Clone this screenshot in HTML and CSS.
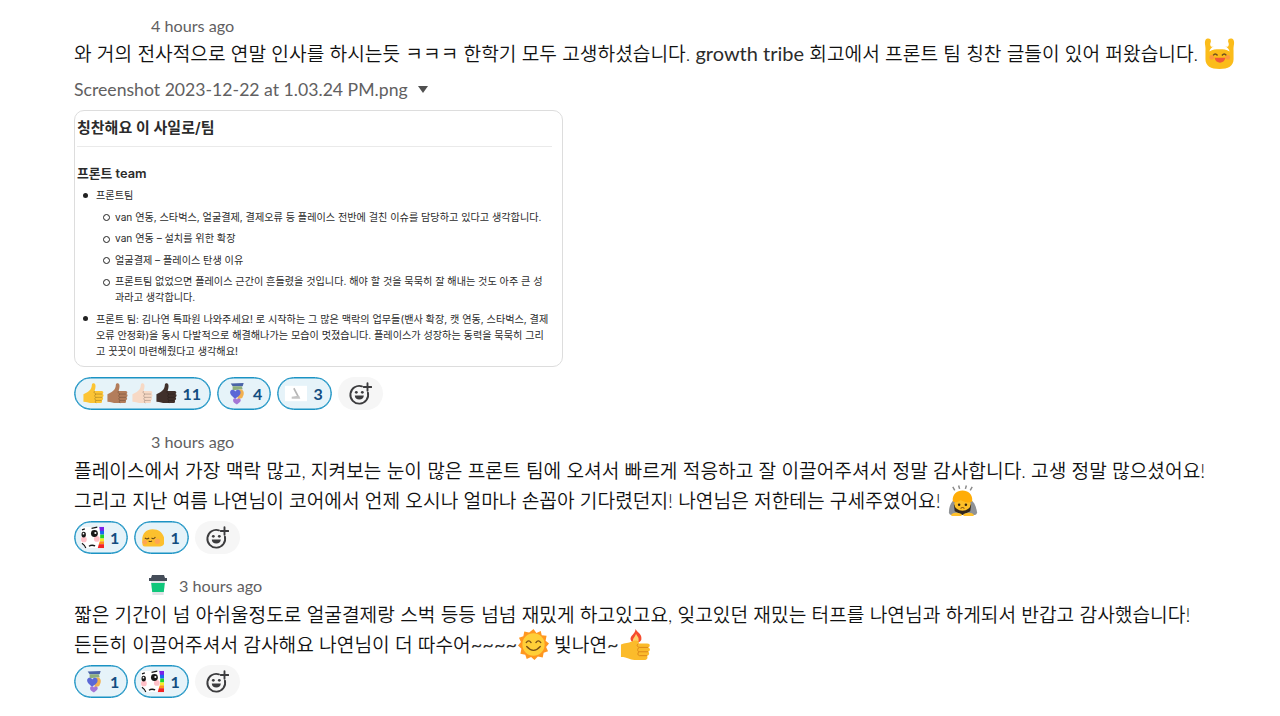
FILE: index.html
```
<!DOCTYPE html>
<html lang="ko">
<head>
    <meta charset="UTF-8">
    <meta name="viewport" content="width=device-width, initial-scale=1.0">
    <title>프론트 팀 칭찬</title>
    <link rel="stylesheet" href="styles.css">
</head>
<body>
    <!-- Shared icons -->
    <svg class="sprite" xmlns="http://www.w3.org/2000/svg">
        <symbol id="thumb" viewBox="0 0 24 24">
            <path d="M1.5 12.8C3.5 11.6 5.6 11.2 7.2 9.5C9.4 7.3 10.2 5.5 10.3 2.8C10.4.8 13.6.6 14 3.2C14.4 5.5 13.6 7.5 13.2 9.5H20.3C22.6 9.5 22.8 12 21.2 12.6C23.1 13 22.8 15.5 21.3 16C22.6 16.6 22.2 18.9 20.6 19.2C21.5 20.2 20.7 22 19.1 22H10.5C7.5 22 5.5 20.8 1.5 20.6Z" fill="currentColor"/>
            <path d="M14.5 12.6H21.2M14.3 16H21.3M14.5 19.2H20.6M13.2 9.5C11.8 10.5 13 12 14.5 12.6C13 13.3 13 15.3 14.3 16C13 16.7 13.2 18.6 14.5 19.2C13.5 20 13.8 21.5 15 22" fill="none" stroke="#000" stroke-opacity=".28" stroke-width=".8"/>
        </symbol>
        <symbol id="add-reaction" viewBox="0 0 24 24">
            <path d="M14 4.3A8.9 8.9 0 1 0 19.9 10.6" fill="none" stroke="#3c3c3e" stroke-width="1.9" stroke-linecap="round"/>
            <path d="M19.5 1.2V8.8M15.7 5H23.3" fill="none" stroke="#3c3c3e" stroke-width="1.9" stroke-linecap="round"/>
            <circle cx="8.3" cy="10.3" r="1.4" fill="#3c3c3e"/>
            <circle cx="14.3" cy="10.3" r="1.4" fill="#3c3c3e"/>
            <path d="M6.8 13.6H15.8C15.8 16 13.9 17.6 11.3 17.6S6.8 16 6.8 13.6Z" fill="#3c3c3e"/>
        </symbol>
        <symbol id="grape" viewBox="0 0 24 24">
            <path d="M7 1.500L20.500 1L19.500 4.500H9Z" fill="#4a63a8"/>
            <path d="M9 4.500H18.500L19.500 7.500L9 8.500Z" fill="#8fae7c"/>
            <path d="M17.500 7.500C22 8.500 21 14 18.500 17L14 18L15 9Z" fill="#f2b150"/>
            <path d="M11.800 17.500C9 15.500 5.700 13 6.500 10C7.500 7 11 8 11.800 9.800C13.500 7 17.500 8 17.300 11C17.300 14 14 15.500 11.800 17.500Z" fill="#5b68d6"/>
            <path d="M13.500 23.500C11 22 9 20.700 9.500 18.500C10.300 16.200 13 17 13.500 18.300C14.500 16.500 17.500 17 17.500 19C17.500 21 15 22 13.500 23.500Z" fill="#a477d6"/>
        </symbol>
        <symbol id="rainbow-face" viewBox="0 0 24 24">
            <path d="M18 1H24V6H18Z" fill="#7a22e8"/>
            <path d="M18 5H24V9H18Z" fill="#1667f0"/>
            <path d="M18 9H24V13H18Z" fill="#1fd42b"/>
            <path d="M18 13H24V16H18Z" fill="#f8ed24"/>
            <path d="M18 16H24V19H18Z" fill="#ff9418"/>
            <path d="M17 19H24V23H17Z" fill="#f22525"/>
            <path d="M0 1H19C20 5 20.500 12 19.500 16L17.500 23H6L0 17Z" fill="#fff"/>
            <circle cx="3" cy="14" r="3" fill="#ffc0c8"/>
            <circle cx="16.500" cy="13.500" r="3" fill="#ffc0c8"/>
            <ellipse cx="2.800" cy="9" rx="2.300" ry="2.900" fill="#181818"/>
            <ellipse cx="14" cy="7.800" rx="3.600" ry="3.600" fill="#181818"/>
            <circle cx="2.600" cy="8" r=".9" fill="#fff"/>
            <circle cx="15" cy="7.300" r="1.100" fill="#fff"/>
            <path d="M1 4L4 3M11 2.500L17 1.200M1 18Q4 20 5 23" fill="none" stroke="#181818" stroke-width="1.200"/>
            <path d="M8 20.500Q11 18.500 15 20L14.500 21.500Q11 20.300 8.500 21.700Z" fill="#181818"/>
        </symbol>
    </svg>

    <div class="thread">
        <div class="message">
            <div class="message-head">4 hours ago</div>
            <div class="message-text">
                <span class="line">와 거의 전사적으로 연말 인사를 하시는듯 ㅋㅋㅋ 한학기 모두 고생하셨습니다. <span class="latin">growth tribe</span> 회고에서 프론트 팀 칭찬 글들이 있어 퍼왔습니다.</span>
                <svg class="emoji" viewBox="0 0 32 32">
                    <path d="M1.500 2C3-.5 8 0 7 4C5.500 7 7 9.500 9 9H23C25 9.500 26.500 7 25 4C24 0 29-.5 30.500 2C32 6 30 8 30.500 13V22C30.500 29 25 32 16 32S1.500 29 1.500 22V13C2 8 0 6 1.500 2Z" fill="#fbbc1a"/>
                    <path d="M5.500 14C7 9.500 10 7.500 16 7.500S25 9.500 26.500 14C23 11.500 20 11.500 16 11.500S9 11.500 5.500 14Z" fill="#fff"/>
                    <circle cx="8" cy="20" r="2.500" fill="#ff993c"/>
                    <circle cx="24.500" cy="20" r="2.500" fill="#ff993c"/>
                    <path d="M9.500 18Q11.500 15 14 18M18.500 18Q21 15 23 18" fill="none" stroke="#71501e" stroke-width="1.500"/>
                    <path d="M11 20.500H22C21.500 24 19 25.500 16.500 25.500S11.500 24 11 20.500Z" fill="#f05838"/>
                </svg>
            </div>
            <div class="file-name">Screenshot 2023-12-22 at 1.03.24 PM.png <span class="caret"></span></div>
            <div class="attachment">
                <h1 class="doc-title">칭찬해요 이 사일로/팀</h1>
                <h2 class="doc-subtitle">프론트 team</h2>
                <ul class="doc-list">
                    <li>프론트팀
                        <ul class="doc-sublist">
                            <li>van 연동, 스타벅스, 얼굴결제, 결제오류 등 플레이스 전반에 걸친 이슈를 담당하고 있다고 생각합니다.</li>
                            <li>van 연동 – 설치를 위한 확장</li>
                            <li>얼굴결제 – 플레이스 탄생 이유</li>
                            <li>프론트팀 없었으면 플레이스 근간이 흔들렸을 것입니다. 해야 할 것을 묵묵히 잘 해내는 것도 아주 큰 성<br>과라고 생각합니다.</li>
                        </ul>
                    </li>
                    <li>프론트 팀: 김나연 특파원 나와주세요! 로 시작하는 그 많은 맥락의 업무들(밴사 확장, 캣 연동, 스타벅스, 결제<br>오류 안정화)을 동시 다발적으로 해결해나가는 모습이 멋졌습니다. 플레이스가 성장하는 동력을 묵묵히 그리<br>고 꿋꿋이 마련해줬다고 생각해요!</li>
                </ul>
            </div>
            <div class="reactions">
                <div class="reaction reaction-wide">
                    <svg class="icon skin-yellow"><use href="#thumb"/></svg>
                    <svg class="icon skin-medium"><use href="#thumb"/></svg>
                    <svg class="icon skin-light"><use href="#thumb"/></svg>
                    <svg class="icon skin-dark"><use href="#thumb"/></svg>
                    <span class="count">11</span>
                </div>
                <div class="reaction">
                    <svg class="icon"><use href="#grape"/></svg>
                    <span class="count">4</span>
                </div>
                <div class="reaction">
                    <svg class="icon" viewBox="0 0 24 24">
                        <path d="M1 4H24V20H1Z" fill="#fff"/>
                        <path d="M11 6L15.500 14.500L13.800 15L9.500 7Z" fill="#b5b5b5"/>
                        <path d="M8 15.500L13 14.500H16L17 17.500H8Z" fill="#c4c4c4"/>
                    </svg>
                    <span class="count">3</span>
                </div>
                <div class="add"><svg class="add-icon"><use href="#add-reaction"/></svg></div>
            </div>
        </div>

        <div class="message">
            <div class="message-head">3 hours ago</div>
            <div class="message-text">
                <span class="line">플레이스에서 가장 맥락 많고, 지켜보는 눈이 많은 프론트 팀에 오셔서 빠르게 적응하고 잘 이끌어주셔서 정말 감사합니다. 고생 정말 많으셨어요!</span><br>
                <span class="line">그리고 지난 여름 나연님이 코어에서 언제 오시나 얼마나 손꼽아 기다렸던지! 나연님은 저한테는 구세주였어요!</span>
                <svg class="emoji" viewBox="0 0 32 32">
                    <path d="M6 2L8 5.500M12 .5L13 4M20 .5L19 4M26 2L24 5.500" stroke="#888" stroke-width="1.500"/>
                    <path d="M8 15C4 17 2 23 2 28Q2 31 6 31H27Q31 31 31 28C30 22 28 17 24 15Z" fill="#8f9296"/>
                    <path d="M7 20H25L24 27L16 31L8 27Z" fill="#30271d"/>
                    <ellipse cx="16" cy="19.500" rx="8.500" ry="7" fill="#fcbf28"/>
                    <path d="M6 17C4 2 28 2 26 17C22 19 18 17.500 14 15.500C12 17.500 9 18.500 6 17Z" fill="#ffad08"/>
                    <circle cx="12.500" cy="20.500" r="1.300" fill="#352512"/>
                    <circle cx="19.500" cy="20.500" r="1.300" fill="#352512"/>
                    <path d="M14 24Q16 22.500 18 24" fill="none" stroke="#71400b"/>
                    <path d="M4 31Q7 27 15 30V32H5ZM28 31Q25 27 17 30V32H27Z" fill="#ffc12c"/>
                </svg>
            </div>
            <div class="reactions">
                <div class="reaction">
                    <svg class="icon"><use href="#rainbow-face"/></svg>
                    <span class="count">1</span>
                </div>
                <div class="reaction">
                    <svg class="icon" viewBox="0 0 24 24">
                        <path d="M1.500 19C0 8 5 3.500 12 3.500C20 3.500 24.500 9 24.500 16C24.500 20 22 21.500 18 21.500H6C3 21.500 1.700 21 1.500 19Z" fill="#fcc02e"/>
                        <circle cx="4" cy="17" r="2.300" fill="#ffa552"/>
                        <circle cx="17" cy="16" r="2.700" fill="#ffa552"/>
                        <path d="M4 12.500Q6 14.500 8.500 12.500M11 12.500Q13 14.500 15 11.500M8 15.500Q9.500 17 11.500 15.500" fill="none" stroke="#604219" stroke-width="1.100"/>
                    </svg>
                    <span class="count">1</span>
                </div>
                <div class="add"><svg class="add-icon"><use href="#add-reaction"/></svg></div>
            </div>
        </div>

        <div class="message">
            <div class="message-head has-status">
                <svg class="status" viewBox="0 0 18 20">
                    <path d="M3 0H15L16 3H18V6H0V3H2Z" fill="#454d59"/>
                    <path d="M2 6H16L14.500 20H3.500Z" fill="#dfe3e6"/>
                    <path d="M2.200 8H15.800L14.800 17H3.200Z" fill="#10c77b"/>
                </svg>
                3 hours ago
            </div>
            <div class="message-text">
                <span class="line">짧은 기간이 넘 아쉬울정도로 얼굴결제랑 스벅 등등 넘넘 재밌게 하고있고요, 잊고있던 재밌는 터프를 나연님과 하게되서 반갑고 감사했습니다!</span><br>
                <span class="line">든든히 이끌어주셔서 감사해요 나연님이 더 따수어<span class="latin">~~~~</span></span><svg class="emoji" viewBox="0 0 32 32">
                    <path d="M16 0L19 4L23.500 2L24.500 6.500L29.500 7L28.500 12L32 15L29 18.500L31 23L26.500 24.500L25.500 29.500L20.500 28.500L17 32L13.500 29L9 31L7.500 26.500L2.500 25.500L3.500 20.500L0 17L3 13.500L1 9L5.500 7.500L6.500 2.500L11.500 3.500Z" fill="#ff9720"/>
                    <circle cx="16" cy="16" r="11.500" fill="#ffcf38"/>
                    <path d="M8.500 14Q11 10.500 13.500 14M18.500 14Q21 10.500 23.500 14M9 18Q16 26 23 18" fill="none" stroke="#795016" stroke-width="1.400" stroke-linecap="round"/>
                </svg>
                <span class="line">빛나연<span class="latin">~</span></span><svg class="emoji" viewBox="0 0 32 32">
                    <path d="M16 0C18 4 23 5 22 11C21 15 12 15 11 11C10 7 16 5 16 0Z" fill="#f64c2f"/>
                    <path d="M16.500 5C18 8 20 9 19 13H13.500C12.500 10 16 8 16.500 5Z" fill="#ffd06b"/>
                    <path d="M1 16C5 14 9 15 12 13C14 11.500 19 11 19.500 13.500L19 15H28C32 15 31 19 29 19C32 20 31 23 29 23.500C31 24.500 30 27.500 28 27.500C29 30 28 32 25 32H15C10 32 8 29 1 29Z" fill="#fbbb2b"/>
                    <path d="M20 19H29M19.500 23.500H29M20 27.500H28M19 15C16.500 17 18 18.500 20 19C17.500 20.500 18 23 19.500 23.500C18 25 18 27 20 27.500" fill="none" stroke="#dc8719"/>
                </svg>
            </div>
            <div class="reactions">
                <div class="reaction">
                    <svg class="icon"><use href="#grape"/></svg>
                    <span class="count">1</span>
                </div>
                <div class="reaction">
                    <svg class="icon"><use href="#rainbow-face"/></svg>
                    <span class="count">1</span>
                </div>
                <div class="add"><svg class="add-icon"><use href="#add-reaction"/></svg></div>
            </div>
        </div>
    </div>
</body>
</html>
```
FILE: styles.css
```
* {
    box-sizing: border-box;
}
body {
    margin: 0;
    background-color: #fff;
    color: #1d1c1d;
    font-family: Lato, "Noto Sans CJK KR", sans-serif;
}
.sprite {
    display: none;
}
.thread {
    display: flex;
    flex-direction: column;
    gap: 21px;
    padding: 15px 0 0 74px;
    height: 716px;
    overflow: hidden;
}

/* Messages */
.message-head {
    display: flex;
    align-items: center;
    height: 25px;
    padding: 0 0 4px 77px;
    font-size: 16.2px;
    color: #616061;
}
.has-status {
    padding-left: 75px;
}
.status {
    width: 18px;
    height: 20px;
    margin: -2px 12px 0 0;
}
.message-text {
    font-size: 19.19px;
    line-height: 30px;
    white-space: nowrap;
    color: #111;
}
.message:first-child .message-text {
    margin-top: -1px;
}
.line {
    font-weight: 350;
}
.latin {
    font-size: 20px;
    font-weight: 400;
    line-height: 1;
    color: #2c2c2c;
}
.emoji {
    width: 31px;
    height: 31px;
    margin: -8px 0 -8px 1px;
    vertical-align: 0;
}
.file-name {
    display: flex;
    align-items: center;
    height: 28px;
    margin-top: 6px;
    font-size: 17.65px;
    color: #616061;
}
.caret {
    margin-left: 10px;
    border: 5px solid transparent;
    border-top: 7px solid #505050;
    border-bottom: 0;
}

/* Attached document */
.attachment {
    width: 489px;
    height: 257px;
    margin-top: 7px;
    padding: 4px 3px 0 2px;
    border: 1px solid #ddd;
    border-radius: 10px;
    font-family: Inter, "Noto Sans CJK KR", sans-serif;
    color: #2b2b2b;
    white-space: nowrap;
}
.doc-title {
    width: 475px;
    height: 32px;
    margin: 0;
    border-bottom: 1px solid #eaeaea;
    font-size: 15px;
    line-height: 26px;
    font-weight: 600;
}
.doc-subtitle {
    margin: 17px 0 0;
    font-size: 12.8px;
    line-height: 20px;
    font-weight: 600;
}
.doc-list,
.doc-sublist {
    margin: 0;
    padding: 0;
    list-style: none;
    font-size: 10.13px;
    line-height: 16px;
}
.doc-list li {
    position: relative;
    padding-top: 5.5px;
}
.doc-list > li {
    padding-left: 19px;
}
.doc-list > li:first-child {
    padding-top: 3px;
}
.doc-sublist > li {
    padding-left: 19px;
}
.doc-list li::before {
    content: "";
    position: absolute;
    left: 6px;
    top: 11px;
    width: 5px;
    height: 5px;
    border-radius: 50%;
    background-color: #222;
}
.doc-list > li:first-child::before {
    top: 9px;
}
.doc-list .doc-sublist > li::before {
    left: 7px;
    top: 11px;
    border: 1px solid #222;
    background-color: #fff;
}
.doc-list .doc-sublist > li:first-child {
    padding-top: 5.5px;
}

/* Reactions */
.reactions {
    display: flex;
    gap: 6px;
    margin-top: 6px;
}
.attachment + .reactions {
    margin-top: 10px;
}
.message-text + .reactions {
    margin-top: 5px;
}
.reaction {
    display: flex;
    align-items: center;
    justify-content: space-between;
    width: 54.4px;
    height: 33px;
    padding: 0 8px 0 6px;
    border: 1px solid #1b93c4;
    border-radius: 17px;
    box-shadow: inset 0 0 0 0.5px #1b93c4;
    background-color: #e6f3f9;
}
.reaction-wide {
    width: 137px;
    padding: 0 9px 0 7px;
}
.icon {
    width: 23px;
    height: 23px;
}
.reaction-wide .icon {
    margin-right: 1.3px;
}
.skin-yellow {
    color: #fcc434;
}
.skin-medium {
    color: #b37d5b;
}
.skin-light {
    color: #f7d9c5;
}
.skin-dark {
    color: #40302b;
}
.count {
    font-size: 16px;
    font-weight: 700;
    color: #134d80;
}
.reaction-wide .count {
    margin-left: 3px;
}
.add {
    display: flex;
    align-items: center;
    justify-content: center;
    width: 45px;
    height: 33px;
    padding-right: 1px;
    border-radius: 17px;
    background-color: #f6f6f6;
}
.add-icon {
    width: 24px;
    height: 24px;
}
```
